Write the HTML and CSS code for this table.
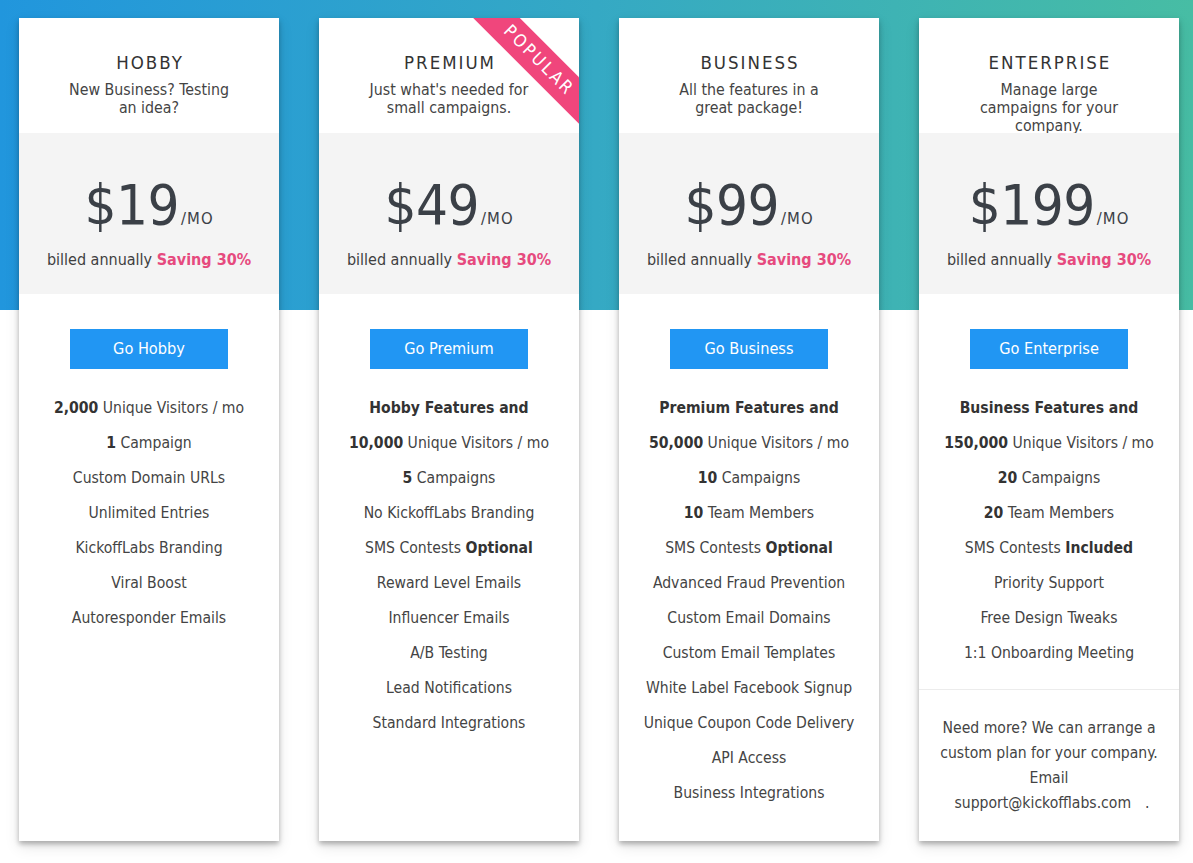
FILE: index.html
```html
<!DOCTYPE html>
<html lang="en">
<head>
<meta charset="utf-8">
<title>Pricing</title>
<link rel="stylesheet" href="styles.css">
</head>
<body>
<div class="page">
  <div class="plans">
    <div class="card">
      <div class="head">
        <h2 class="title">HOBBY</h2>
        <p class="desc">New Business? Testing<br>an idea?</p>
      </div>
      <div class="price">
        <div class="amount">$19<span class="per">/MO</span></div>
        <div class="billed">billed annually <b class="save">Saving 30%</b></div>
      </div>
      <div class="body">
        <a class="btn">Go Hobby</a>
        <ul class="features">
          <li><b>2,000</b> Unique Visitors / mo</li>
          <li><b>1</b> Campaign</li>
          <li>Custom Domain URLs</li>
          <li>Unlimited Entries</li>
          <li>KickoffLabs Branding</li>
          <li>Viral Boost</li>
          <li>Autoresponder Emails</li>
        </ul>
      </div>
    </div>

    <div class="card">
      <div class="ribbon">POPULAR</div>
      <div class="head">
        <h2 class="title">PREMIUM</h2>
        <p class="desc">Just what's needed for<br>small campaigns.</p>
      </div>
      <div class="price">
        <div class="amount">$49<span class="per">/MO</span></div>
        <div class="billed">billed annually <b class="save">Saving 30%</b></div>
      </div>
      <div class="body">
        <a class="btn">Go Premium</a>
        <ul class="features">
          <li><b>Hobby Features and</b></li>
          <li><b>10,000</b> Unique Visitors / mo</li>
          <li><b>5</b> Campaigns</li>
          <li>No KickoffLabs Branding</li>
          <li>SMS Contests <b>Optional</b></li>
          <li>Reward Level Emails</li>
          <li>Influencer Emails</li>
          <li>A/B Testing</li>
          <li>Lead Notifications</li>
          <li>Standard Integrations</li>
        </ul>
      </div>
    </div>

    <div class="card">
      <div class="head">
        <h2 class="title">BUSINESS</h2>
        <p class="desc">All the features in a<br>great package!</p>
      </div>
      <div class="price">
        <div class="amount">$99<span class="per">/MO</span></div>
        <div class="billed">billed annually <b class="save">Saving 30%</b></div>
      </div>
      <div class="body">
        <a class="btn">Go Business</a>
        <ul class="features">
          <li><b>Premium Features and</b></li>
          <li><b>50,000</b> Unique Visitors / mo</li>
          <li><b>10</b> Campaigns</li>
          <li><b>10</b> Team Members</li>
          <li>SMS Contests <b>Optional</b></li>
          <li>Advanced Fraud Prevention</li>
          <li>Custom Email Domains</li>
          <li>Custom Email Templates</li>
          <li>White Label Facebook Signup</li>
          <li>Unique Coupon Code Delivery</li>
          <li>API Access</li>
          <li>Business Integrations</li>
        </ul>
      </div>
    </div>

    <div class="card">
      <div class="head">
        <h2 class="title">ENTERPRISE</h2>
        <p class="desc">Manage large<br>campaigns for your<br>company.</p>
      </div>
      <div class="price">
        <div class="amount">$199<span class="per">/MO</span></div>
        <div class="billed">billed annually <b class="save">Saving 30%</b></div>
      </div>
      <div class="body body-tight">
        <a class="btn">Go Enterprise</a>
        <ul class="features">
          <li><b>Business Features and</b></li>
          <li><b>150,000</b> Unique Visitors / mo</li>
          <li><b>20</b> Campaigns</li>
          <li><b>20</b> Team Members</li>
          <li>SMS Contests <b>Included</b></li>
          <li>Priority Support</li>
          <li>Free Design Tweaks</li>
          <li>1:1 Onboarding Meeting</li>
        </ul>
      </div>
      <div class="more">
        Need more? We can arrange a<br>custom plan for your company.<br>Email<br><a class="mail">support@kickofflabs.com</a>.
      </div>
    </div>
  </div>
</div>
</body>
</html>
```

FILE: styles.css
```css
html, body {
  margin: 0;
  padding: 0;
  background: #ffffff;
}

body {
  font-family: "DejaVu Sans Condensed", "DejaVu Sans", Verdana, sans-serif;
  font-size: 15.6px;
  color: #444;
}

.page {
  width: 1193px;
  min-height: 863px;
  background-image: linear-gradient(to right, #2196dd, #35a9c4 50%, #47bda4);
  background-repeat: no-repeat;
  background-size: 100% 310px;
  padding: 18px 14px 0 19px;
  box-sizing: border-box;
}

.plans {
  display: grid;
  grid-template-columns: repeat(4, 260px);
  column-gap: 40px;
  align-items: stretch;
}

.card {
  position: relative;
  overflow: hidden;
  background: #fff;
  display: flex;
  flex-direction: column;
  box-shadow: 0 3px 5px rgba(0, 0, 0, 0.28), 0 6px 14px rgba(0, 0, 0, 0.1);
}

.ribbon {
  position: absolute;
  left: 134px;
  top: 25px;
  width: 170px;
  height: 33px;
  line-height: 33px;
  background: #f0467c;
  color: #fff;
  text-align: center;
  font-size: 17.5px;
  letter-spacing: 2.5px;
  text-indent: 2.5px;
  transform: rotate(45deg);
}

.head {
  height: 115px;
  box-sizing: border-box;
  padding-top: 33px;
  text-align: center;
}

.title {
  margin: 0;
  font-size: 18.5px;
  line-height: 24px;
  font-weight: normal;
  letter-spacing: 2px;
  text-indent: 2px;
  color: #333;
}

.desc {
  margin: 6px 0 0;
  font-size: 15.8px;
  line-height: 18px;
  color: #444;
}

.price {
  background: #f4f4f4;
  height: 161px;
  box-sizing: border-box;
  padding-top: 42px;
  text-align: center;
}

.amount {
  font-size: 56px;
  line-height: 60px;
  color: #3b4047;
  letter-spacing: -0.5px;
}

.per {
  font-size: 16.5px;
  line-height: 1;
  letter-spacing: 1px;
  margin-left: 2px;
}

.billed {
  margin-top: 15px;
  line-height: 20px;
  font-size: 16px;
  color: #3f3f3f;
}

.save {
  color: #e64a7e;
}

.body {
  display: flex;
  flex-direction: column;
  align-items: center;
  padding: 35px 0 30px;
}

.body-tight {
  padding-bottom: 18px;
}

.btn {
  display: block;
  width: 158px;
  height: 40px;
  line-height: 40px;
  background: #2196f3;
  color: #fff;
  text-align: center;
  font-size: 16.2px;
}

.features {
  list-style: none;
  margin: 22px 0 0;
  padding: 0;
  text-align: center;
}

.features li {
  line-height: 35px;
  font-size: 15.6px;
  color: #444;
  white-space: nowrap;
}

.features b {
  color: #333;
}

.more {
  margin-top: auto;
  border-top: 1px solid #ececec;
  padding: 26px 0 25px;
  text-align: center;
  line-height: 25px;
  font-size: 15.6px;
  color: #444;
}

.mail {
  color: #444;
  padding: 0 14px 0 6px;
}
```
